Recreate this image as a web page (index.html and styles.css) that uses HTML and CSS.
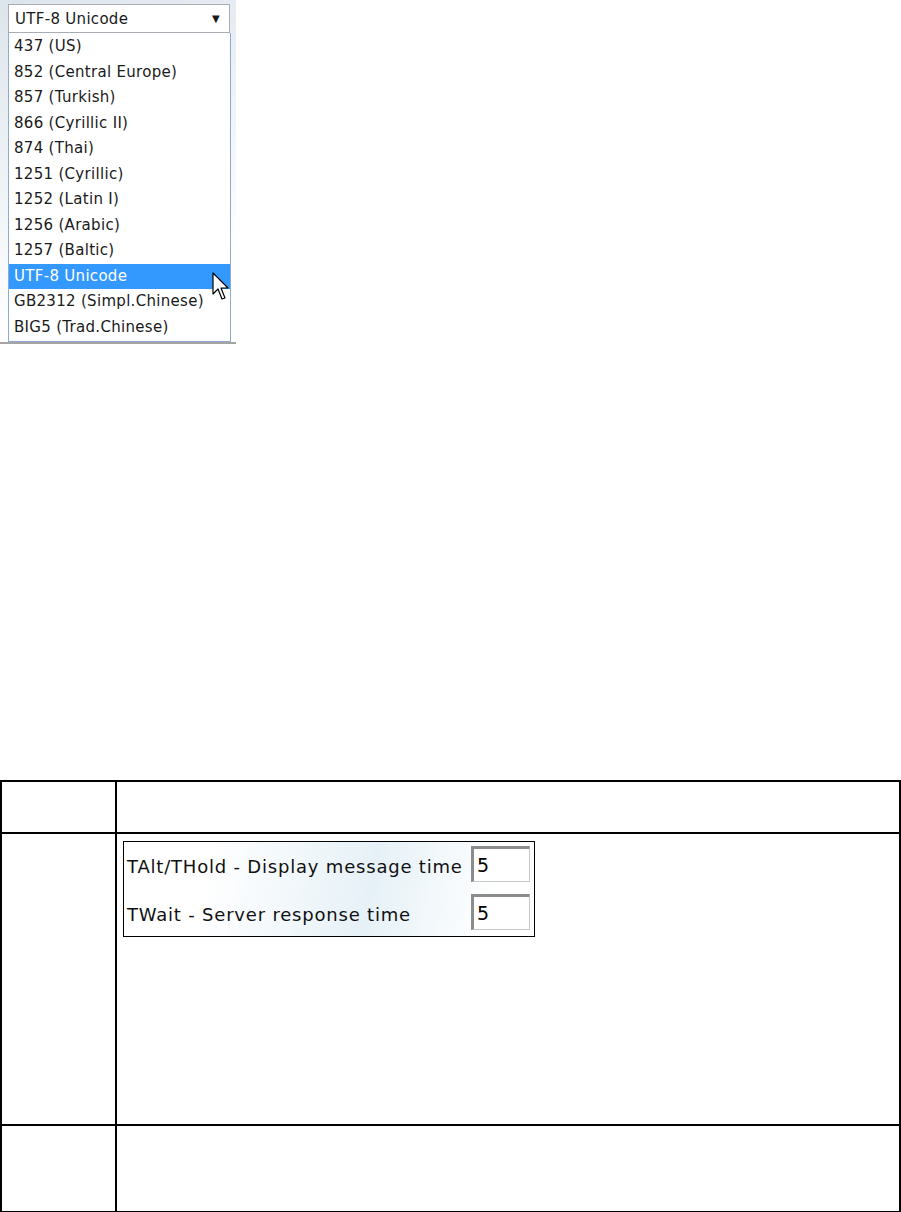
FILE: index.html
```html
<!DOCTYPE html>
<html lang="en">
<head>
    <meta charset="UTF-8">
    <meta name="viewport" content="width=device-width, initial-scale=1.0">
    <title>Codepage and timing settings</title>
    <link rel="stylesheet" href="styles.css">
</head>
<body>
    <div class="shot">
        <div class="select-box">
            <span>UTF-8 Unicode</span>
            <span class="arrow">&#9660;</span>
        </div>
        <ul class="options">
            <li>437 (US)</li>
            <li>852 (Central Europe)</li>
            <li>857 (Turkish)</li>
            <li>866 (Cyrillic II)</li>
            <li>874 (Thai)</li>
            <li>1251 (Cyrillic)</li>
            <li>1252 (Latin I)</li>
            <li>1256 (Arabic)</li>
            <li>1257 (Baltic)</li>
            <li class="selected">UTF-8 Unicode</li>
            <li>GB2312 (Simpl.Chinese)</li>
            <li>BIG5 (Trad.Chinese)</li>
        </ul>
        <!-- mouse pointer over the selected option -->
        <svg class="cursor" width="20" height="30" viewBox="0 0 20 30">
            <path d="M1 1 L1 22 L6 17 L10 27 L13 26 L9 16 L16 16 Z" fill="#fff" stroke="#000" stroke-width="1.2" stroke-linejoin="round"/>
        </svg>
    </div>

    <table class="doc-table">
        <tr class="row-head">
            <td class="col-a"></td>
            <td></td>
        </tr>
        <tr class="row-body">
            <td class="col-a"></td>
            <td>
                <div class="timing">
                    <div class="timing-row">
                        <span>TAlt/THold - Display message time</span>
                        <input type="text" value="5">
                    </div>
                    <div class="timing-row">
                        <span>TWait - Server response time</span>
                        <input type="text" value="5">
                    </div>
                </div>
            </td>
        </tr>
        <tr class="row-foot">
            <td class="col-a"></td>
            <td></td>
        </tr>
    </table>
</body>
</html>
```

FILE: styles.css
```css
body {
    margin: 0;
    background-color: white;
    font-family: "DejaVu Sans", Verdana, sans-serif;
}
.shot {
    position: relative;
    width: 236px;
    height: 344px;
    padding-top: 4px;
    box-sizing: border-box;
    background: linear-gradient(160deg, #dde5ec 0%, #eef2f5 40%, #ffffff 80%);
    border-bottom: 2px solid #a4a4a4;
}
.select-box {
    margin-left: 8px;
    width: 222px;
    height: 29px;
    box-sizing: border-box;
    border: 1px solid #a7adb3;
    background-color: white;
    display: flex;
    justify-content: space-between;
    align-items: center;
    padding: 0 9px 0 6px;
    font-size: 15px;
    letter-spacing: 0.3px;
    color: #1a1a1a;
}
.select-box .arrow {
    font-size: 10px;
}
.options {
    list-style: none;
    margin: 0 0 0 8px;
    padding: 1px 0;
    width: 223px;
    box-sizing: border-box;
    border: 1px solid #8eaad2;
    border-top: none;
    background-color: white;
}
.options li {
    height: 25.5px;
    line-height: 25.5px;
    padding-left: 5px;
    font-size: 15px;
    letter-spacing: 0.3px;
    color: #1a1a1a;
}
.options li.selected {
    background-color: #3399ff;
    color: white;
}
.cursor {
    position: absolute;
    left: 212px;
    top: 272px;
}
.doc-table {
    margin-top: 436px;
    width: 901px;
    border-collapse: collapse;
}
.doc-table td {
    border: 2px solid black;
    padding: 0;
    vertical-align: top;
}
.doc-table .col-a {
    width: 113px;
}
.row-head td {
    height: 50px;
}
.row-body td {
    height: 290px;
}
.row-foot td {
    height: 85px;
}
.timing {
    margin: 7px 0 0 6px;
    width: 412px;
    height: 96px;
    box-sizing: border-box;
    border: 1px solid black;
    padding: 4px 4px 0 3px;
    background: linear-gradient(100deg, #ffffff 20%, #e6f1f7 60%, #ffffff 90%);
    display: flex;
    flex-direction: column;
    gap: 12px;
}
.timing-row {
    display: flex;
    justify-content: space-between;
    align-items: center;
    font-size: 18px;
    letter-spacing: 0.8px;
    color: #111;
}
.timing-row span {
    padding-top: 5px;
}
.timing-row input {
    width: 59px;
    height: 36px;
    box-sizing: border-box;
    border: 1px solid #c8c8c8;
    border-top: 3px solid #8c8c8c;
    border-left: 3px solid #8c8c8c;
    font-family: "DejaVu Sans", Verdana, sans-serif;
    font-size: 19px;
    padding: 0 3px;
    background-color: white;
}
```
